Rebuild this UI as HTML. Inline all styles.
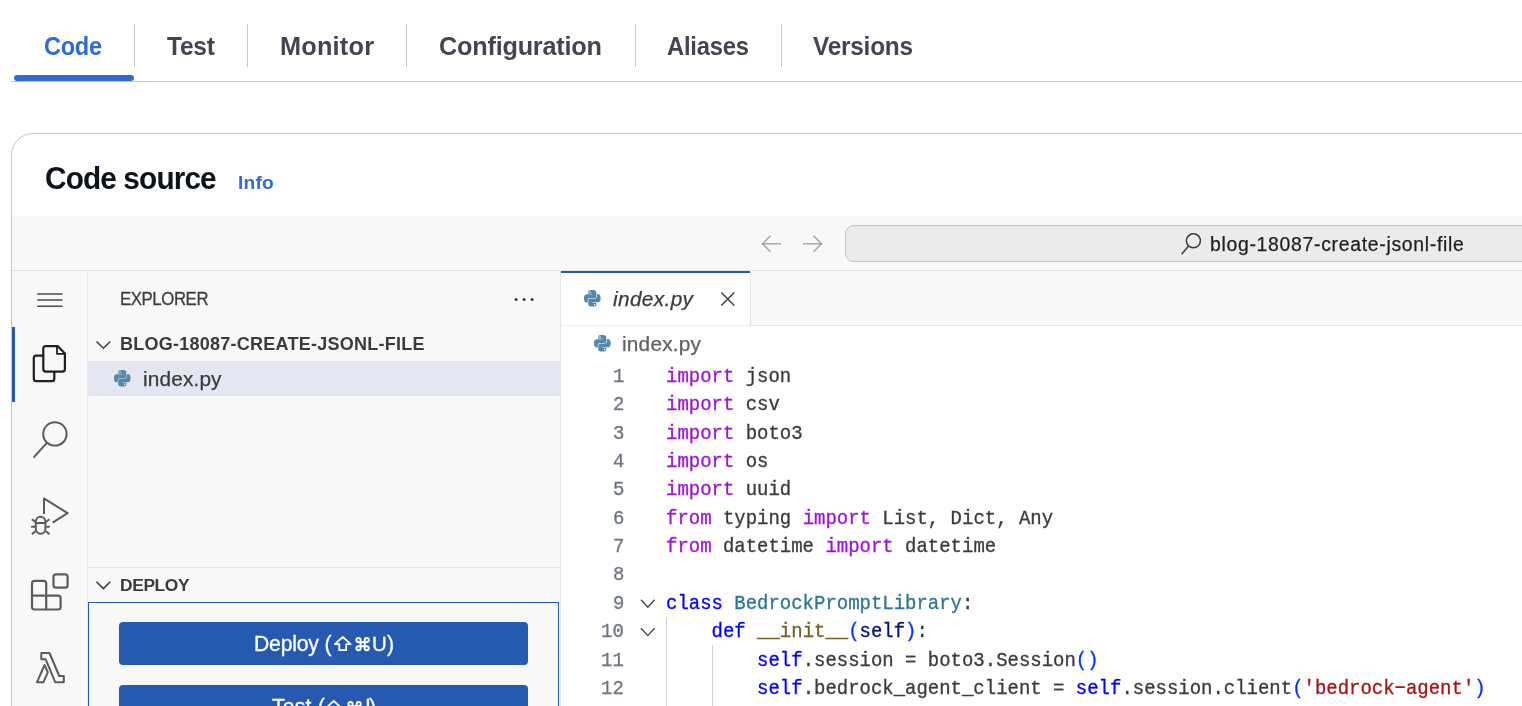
<!DOCTYPE html>
<html lang="en"><head><meta charset="utf-8"><title>Lambda - Code source</title>
<style>
html,body{margin:0;padding:0;background:#fff;}
body{width:1522px;height:706px;position:relative;overflow:hidden;font-family:"Liberation Sans",sans-serif;}
div,svg{box-sizing:border-box;}
svg{position:absolute;overflow:visible;}
.t{position:absolute;line-height:1;white-space:pre;will-change:transform;}
.bt{-webkit-text-stroke:0.3px #fff;}
.code,.ln{-webkit-text-stroke-width:0.3px;}
.s{font-family:"Liberation Sans",sans-serif;}
.m{font-family:"Liberation Mono",monospace;}
</style></head><body>

<nav id="tabs">
<div style="position:absolute;left:11px;top:81px;width:1511px;height:1px;background:#c6c6cd;"></div>
<div style="position:absolute;left:14px;top:75px;width:120px;height:6px;background:#2e6ad8;border-radius:3px;"></div>
<div class="t s" style="left:44.00px;top:36.10px;font-size:23.55px;color:#2e6ad8;font-weight:700;letter-spacing:-0.290px;transform:scaleY(1.074);transform-origin:0 19px;">Code</div>
<div class="t s" style="left:167.20px;top:35.10px;font-size:24.48px;color:#424650;font-weight:700;letter-spacing:-0.239px;transform:scaleY(1.0331);transform-origin:0 20px;">Test</div>
<div class="t s" style="left:280.00px;top:34.00px;font-size:25.29px;color:#424650;font-weight:700;letter-spacing:0.216px;">Monitor</div>
<div class="t s" style="left:439.20px;top:34.10px;font-size:25.24px;color:#424650;font-weight:700;letter-spacing:-0.204px;transform:scaleY(1.0019);transform-origin:0 21px;">Configuration</div>
<div class="t s" style="left:667.00px;top:35.10px;font-size:23.76px;color:#424650;font-weight:700;letter-spacing:-0.205px;transform:scaleY(1.0643);transform-origin:0 20px;">Aliases</div>
<div class="t s" style="left:813.00px;top:35.10px;font-size:24.35px;color:#424650;font-weight:700;letter-spacing:-0.214px;transform:scaleY(1.0388);transform-origin:0 20px;">Versions</div>
<div style="position:absolute;left:134px;top:24px;width:1px;height:43px;background:#c6c6cd;"></div>
<div style="position:absolute;left:247px;top:24px;width:1px;height:43px;background:#c6c6cd;"></div>
<div style="position:absolute;left:406px;top:24px;width:1px;height:43px;background:#c6c6cd;"></div>
<div style="position:absolute;left:635px;top:24px;width:1px;height:43px;background:#c6c6cd;"></div>
<div style="position:absolute;left:781px;top:24px;width:1px;height:43px;background:#c6c6cd;"></div>
</nav>
<section id="code-source">
<div style="position:absolute;left:11px;top:133px;width:1560px;height:700px;border:1px solid #c6c6cd;border-radius:22px;background:#fff;"></div>
<div class="t s" style="left:45.30px;top:163.70px;font-size:29.80px;color:#0f141a;font-weight:700;letter-spacing:-0.881px;transform:scaleY(1.08);transform-origin:0 25px;">Code source</div>
<div class="t s" style="left:238.40px;top:173.00px;font-size:19.20px;color:#2e6ad8;font-weight:700;letter-spacing:0.205px;">Info</div>
<div style="position:absolute;left:12px;top:216px;width:1520px;height:490px;background:#f8f8f8;"></div>
<div style="position:absolute;left:12px;top:270px;width:1520px;height:1px;background:#e5e5e5;"></div>
<svg style="left:760px;top:232px" width="66" height="24" viewBox="760 232 66 24" fill="none" stroke="#a9a9a9" stroke-width="1.6"><path d="M781 243.8H762.5M770.5 235.8l-8 8 8 8"/><path d="M803 243.8h18.5M813.5 235.8l8 8-8 8"/></svg>
<div style="position:absolute;left:845px;top:225px;width:700px;height:37px;background:#ebebeb;border:1px solid #c4c4c4;border-radius:9px;"></div>
<svg style="left:1178px;top:230px" width="28" height="28" viewBox="1178 230 28 28" fill="none" stroke="#3b3b3b" stroke-width="1.5"><circle cx="1193.4" cy="240.8" r="7"/><path d="M1188.6 246l-7 8.2"/></svg>
<div class="t s" style="left:1210.40px;top:235.00px;font-size:19.40px;color:#1f1f1f;-webkit-text-stroke-width:0.25px;letter-spacing:0.700px;">blog-18087-create-jsonl-file</div>
<aside id="activitybar">
<div style="position:absolute;left:87px;top:271px;width:1px;height:440px;background:#e5e5e5;"></div>
<div style="position:absolute;left:12px;top:327px;width:3.2px;height:74.5px;background:#2559b0;"></div>
<svg style="left:36px;top:290px" width="28" height="20" viewBox="36 290 28 20" fill="none" stroke="#4a4a4a" stroke-width="1.5"><path d="M37.2 294H62.5M37.2 300.1H62.5M37.2 306.3H62.5"/></svg>
<svg style="left:30px;top:343px" width="38" height="41" viewBox="30 343 38 41" fill="none" stroke="#1f1f1f" stroke-width="2.2" stroke-linejoin="round"><path d="M45.8 346.1H57.6L64.9 353.6V369.1a2.5 2.5 0 0 1-2.5 2.5H45.8a2.5 2.5 0 0 1-2.5-2.5V348.6a2.5 2.5 0 0 1 2.5-2.5z"/><path d="M57 346.3V353.8H64.7" stroke-width="1.8"/><path d="M43.3 355.6H36.3a2.5 2.5 0 0 0-2.5 2.5V378.7a2.5 2.5 0 0 0 2.5 2.5H51.8a2.5 2.5 0 0 0 2.5-2.5V371.6"/></svg>
<svg style="left:30px;top:419px" width="40" height="42" viewBox="30 419 40 42" fill="none" stroke="#5c5c5c" stroke-width="2"><circle cx="54.9" cy="433.9" r="11.7"/><path d="M47 442.6L33.6 457.6"/></svg>
<svg style="left:28px;top:495px" width="44" height="42" viewBox="28 495 44 42" fill="none" stroke="#5c5c5c" stroke-width="2" stroke-linejoin="round"><path d="M44 514V498.4L67.6 513.2L52.6 522.7"/><rect x="35.8" y="516.8" width="9.6" height="17" rx="4.8"/><path d="M35.8 523H45.4M35 526.7H31.1M46.2 526.7H49.8M35.4 522L31.9 519.2M45.9 522L49.4 519.2M35.4 531.3L31.9 534.1M45.9 531.3L49.4 534.1"/></svg>
<svg style="left:29px;top:571px" width="42" height="42" viewBox="29 571 42 42" fill="none" stroke="#5c5c5c" stroke-width="2.2"><path d="M34.5 580.9H43.7a2.5 2.5 0 0 1 2.5 2.5V595.7H58.1a2.5 2.5 0 0 1 2.5 2.5V607a2.5 2.5 0 0 1-2.5 2.5H34.5a2.5 2.5 0 0 1-2.5-2.5V583.4a2.5 2.5 0 0 1 2.5-2.5zM46.2 595.7V609.5M32 595.7H46.2"/><rect x="53.5" y="574.4" width="14.1" height="13.3" rx="2.5"/></svg>
<svg style="left:33px;top:650px" width="34" height="36" viewBox="33 650 34 36" fill="none" stroke="#5c5c5c" stroke-width="2" stroke-linejoin="round"><path d="M41.3 653H49.5L59.2 676H63.8V682.3H55.3L45.6 659.2H41.3Z"/><path d="M44.6 665L36.9 682.3H43.3L47.8 672.4Z"/></svg>
</aside>
<aside id="sidebar">
<div style="position:absolute;left:560px;top:271px;width:1px;height:440px;background:#e5e5e5;"></div>
<div class="t s" style="left:119.70px;top:292.30px;font-size:16.80px;color:#3b3b3b;-webkit-text-stroke-width:0.25px;letter-spacing:-0.414px;transform:scaleY(1.04);transform-origin:0 13px;">EXPLORER</div>
<div class="t s" style="left:119.70px;top:335.00px;font-size:18.00px;color:#3b3b3b;font-weight:700;letter-spacing:0.255px;">BLOG-18087-CREATE-JSONL-FILE</div>
<div style="position:absolute;left:88px;top:361px;width:472px;height:35px;background:#e4e6f1;"></div>
<div class="t s" style="left:142.50px;top:369.00px;font-size:20.80px;color:#3b3b3b;-webkit-text-stroke-width:0.25px;letter-spacing:0.147px;">index.py</div>
<svg style="left:114.1px;top:370.3px" width="16.5" height="16.5" viewBox="0 0 24 24"><path fill="#5288ab" d="M14.25.18l.9.2.73.26.59.3.45.32.34.34.25.34.16.33.1.3.04.26.02.2-.01.13V8.5l-.05.63-.13.55-.21.46-.26.38-.3.31-.33.25-.35.19-.35.14-.33.1-.3.07-.26.04-.21.02H8.77l-.69.05-.59.14-.5.22-.41.27-.33.32-.27.35-.2.36-.15.37-.1.35-.07.32-.04.27-.02.21v3.06H3.17l-.21-.03-.28-.07-.32-.12-.35-.18-.36-.26-.36-.36-.35-.46-.32-.59-.28-.73-.21-.88-.14-1.05-.05-1.23.06-1.22.16-1.04.24-.87.32-.71.36-.57.4-.44.42-.33.42-.24.4-.16.36-.1.32-.05.24-.01h.16l.06.01h8.16v-.83H6.18l-.01-2.75-.02-.37.05-.34.11-.31.17-.28.25-.26.31-.23.38-.2.44-.18.51-.15.58-.12.64-.1.71-.06.77-.04.84-.02 1.27.05zm-6.3 1.98l-.23.33-.08.41.08.41.23.34.33.22.41.09.41-.09.33-.22.23-.34.08-.41-.08-.41-.23-.33-.33-.22-.41-.09-.41.09zm13.09 3.95l.28.06.32.12.35.18.36.27.36.35.35.47.32.59.28.73.21.88.14 1.04.05 1.23-.06 1.23-.16 1.04-.24.86-.32.71-.36.57-.4.45-.42.33-.42.24-.4.16-.36.09-.32.05-.24.02-.16-.01h-8.22v.82h5.84l.01 2.76.02.36-.05.34-.11.31-.17.29-.25.25-.31.24-.38.2-.44.17-.51.15-.58.13-.64.09-.71.07-.77.04-.84.01-1.27-.04-1.07-.14-.9-.2-.73-.25-.59-.3-.45-.33-.34-.34-.25-.34-.16-.33-.1-.3-.04-.25-.02-.2.01-.13v-5.34l.05-.64.13-.54.21-.46.26-.38.3-.32.33-.24.35-.2.35-.14.33-.1.3-.06.26-.04.21-.02.13-.01h5.84l.69-.05.59-.14.5-.21.41-.28.33-.32.27-.35.2-.36.15-.36.1-.35.07-.32.04-.28.02-.21V6.07h2.09l.14.01zm-6.47 14.25l-.23.33-.08.41.08.41.23.33.33.23.41.08.41-.08.33-.23.23-.33.08-.41-.08-.41-.23-.33-.33-.23-.41-.08-.41.08z"/></svg>
<svg style="left:512px;top:296px" width="26" height="8" viewBox="512 296 26 8" fill="#3b3b3b"><circle cx="516.1" cy="299.4" r="1.5"/><circle cx="524.1" cy="299.4" r="1.5"/><circle cx="532.1" cy="299.4" r="1.5"/></svg>
<svg style="left:94px;top:338px" width="20" height="14" viewBox="94 338 20 14" fill="none" stroke="#3b3b3b" stroke-width="1.5"><path d="M96.5 341.5L103.4 348.3L110.3 341.5"/></svg>
<svg style="left:94px;top:578px" width="20" height="14" viewBox="94 578 20 14" fill="none" stroke="#3b3b3b" stroke-width="1.5"><path d="M96.5 581.8L103.4 588.6L110.3 581.8"/></svg>
<div style="position:absolute;left:88px;top:567px;width:472px;height:1px;background:#e5e5e5;"></div>
<div class="t s" style="left:119.70px;top:577.00px;font-size:17.40px;color:#3b3b3b;font-weight:700;letter-spacing:-0.390px;">DEPLOY</div>
<div style="position:absolute;left:88px;top:602px;width:471px;height:110px;border:1px solid #2559b0;"></div>
<div style="position:absolute;left:119px;top:622px;width:409px;height:43px;background:#265ab0;border-radius:4px;"></div>
<div style="position:absolute;left:119px;top:685px;width:409px;height:43px;background:#265ab0;border-radius:4px;"></div>
<div class="bt t s" style="left:254.30px;top:633.00px;font-size:21.20px;color:#fff;letter-spacing:-0.206px;">Deploy (</div>
<svg style="left:334.3px;top:636px" width="17.5" height="15" viewBox="0 0 17.5 15" fill="none" stroke="#fff" stroke-width="1.8" stroke-linejoin="round"><path d="M8.75 0.8 L0.9 8.2 H5.3 V14.2 H12.2 V8.2 H16.6 Z"/></svg>
<svg style="left:355px;top:637px" width="15.2" height="14.4" viewBox="1.5 1.5 21 21" fill="none" stroke="#fff" stroke-width="2.9"><path d="M18 3a3 3 0 0 0-3 3v12a3 3 0 0 0 3 3 3 3 0 0 0 3-3 3 3 0 0 0-3-3H6a3 3 0 0 0-3 3 3 3 0 0 0 3 3 3 3 0 0 0 3-3V6a3 3 0 0 0-3-3 3 3 0 0 0-3 3 3 3 0 0 0 3 3h12a3 3 0 0 0 3-3 3 3 0 0 0-3-3z"/></svg>
<div class="bt t s" style="left:372.00px;top:634.00px;font-size:20.40px;color:#fff;">U</div>
<div class="bt t s" style="left:387.20px;top:633.00px;font-size:21.20px;color:#fff;">)</div>
<div class="bt t s" style="left:271.90px;top:696.00px;font-size:21.20px;color:#fff;letter-spacing:0.194px;">Test (</div>
<svg style="left:325.4px;top:699.7px" width="17.5" height="15" viewBox="0 0 17.5 15" fill="none" stroke="#fff" stroke-width="1.8" stroke-linejoin="round"><path d="M8.75 0.8 L0.9 8.2 H5.3 V14.2 H12.2 V8.2 H16.6 Z"/></svg>
<svg style="left:346.6px;top:700.7px" width="15.2" height="14.4" viewBox="1.5 1.5 21 21" fill="none" stroke="#fff" stroke-width="2.9"><path d="M18 3a3 3 0 0 0-3 3v12a3 3 0 0 0 3 3 3 3 0 0 0 3-3 3 3 0 0 0-3-3H6a3 3 0 0 0-3 3 3 3 0 0 0 3 3 3 3 0 0 0 3-3V6a3 3 0 0 0-3-3 3 3 0 0 0-3 3 3 3 0 0 0 3 3h12a3 3 0 0 0 3-3 3 3 0 0 0-3-3z"/></svg>
<div class="bt t s" style="left:365.00px;top:696.00px;font-size:21.20px;color:#fff;">I</div>
<div class="bt t s" style="left:369.40px;top:696.00px;font-size:21.20px;color:#fff;">)</div>
</aside>
<main id="editor">
<div style="position:absolute;left:561px;top:271px;width:961px;height:435px;background:#fff;"></div>
<div style="position:absolute;left:561px;top:271px;width:961px;height:55px;background:#f8f8f8;border-bottom:1px solid #e5e5e5;"></div>
<div style="position:absolute;left:561px;top:271px;width:189.5px;height:55px;background:#fff;border-right:1px solid #e5e5e5;"></div>
<div style="position:absolute;left:561px;top:325px;width:189px;height:1px;background:#efefef;"></div>
<div style="position:absolute;left:561px;top:270.5px;width:189px;height:2.3px;background:#2559b0;"></div>
<div class="t s" style="left:612.50px;top:289.00px;font-size:20.80px;color:#3b3b3b;-webkit-text-stroke-width:0.25px;font-style:italic;letter-spacing:0.361px;">index.py</div>
<div class="t s" style="left:621.90px;top:334.00px;font-size:20.80px;color:#616161;-webkit-text-stroke-width:0.25px;letter-spacing:0.218px;">index.py</div>
<svg style="left:584.2px;top:290.2px" width="16.6" height="16.6" viewBox="0 0 24 24"><path fill="#5288ab" d="M14.25.18l.9.2.73.26.59.3.45.32.34.34.25.34.16.33.1.3.04.26.02.2-.01.13V8.5l-.05.63-.13.55-.21.46-.26.38-.3.31-.33.25-.35.19-.35.14-.33.1-.3.07-.26.04-.21.02H8.77l-.69.05-.59.14-.5.22-.41.27-.33.32-.27.35-.2.36-.15.37-.1.35-.07.32-.04.27-.02.21v3.06H3.17l-.21-.03-.28-.07-.32-.12-.35-.18-.36-.26-.36-.36-.35-.46-.32-.59-.28-.73-.21-.88-.14-1.05-.05-1.23.06-1.22.16-1.04.24-.87.32-.71.36-.57.4-.44.42-.33.42-.24.4-.16.36-.1.32-.05.24-.01h.16l.06.01h8.16v-.83H6.18l-.01-2.75-.02-.37.05-.34.11-.31.17-.28.25-.26.31-.23.38-.2.44-.18.51-.15.58-.12.64-.1.71-.06.77-.04.84-.02 1.27.05zm-6.3 1.98l-.23.33-.08.41.08.41.23.34.33.22.41.09.41-.09.33-.22.23-.34.08-.41-.08-.41-.23-.33-.33-.22-.41-.09-.41.09zm13.09 3.95l.28.06.32.12.35.18.36.27.36.35.35.47.32.59.28.73.21.88.14 1.04.05 1.23-.06 1.23-.16 1.04-.24.86-.32.71-.36.57-.4.45-.42.33-.42.24-.4.16-.36.09-.32.05-.24.02-.16-.01h-8.22v.82h5.84l.01 2.76.02.36-.05.34-.11.31-.17.29-.25.25-.31.24-.38.2-.44.17-.51.15-.58.13-.64.09-.71.07-.77.04-.84.01-1.27-.04-1.07-.14-.9-.2-.73-.25-.59-.3-.45-.33-.34-.34-.25-.34-.16-.33-.1-.3-.04-.25-.02-.2.01-.13v-5.34l.05-.64.13-.54.21-.46.26-.38.3-.32.33-.24.35-.2.35-.14.33-.1.3-.06.26-.04.21-.02.13-.01h5.84l.69-.05.59-.14.5-.21.41-.28.33-.32.27-.35.2-.36.15-.36.1-.35.07-.32.04-.28.02-.21V6.07h2.09l.14.01zm-6.47 14.25l-.23.33-.08.41.08.41.23.33.33.23.41.08.41-.08.33-.23.23-.33.08-.41-.08-.41-.23-.33-.33-.23-.41-.08-.41.08z"/></svg>
<svg style="left:593.9px;top:335.3px" width="16.6" height="16.6" viewBox="0 0 24 24"><path fill="#5288ab" d="M14.25.18l.9.2.73.26.59.3.45.32.34.34.25.34.16.33.1.3.04.26.02.2-.01.13V8.5l-.05.63-.13.55-.21.46-.26.38-.3.31-.33.25-.35.19-.35.14-.33.1-.3.07-.26.04-.21.02H8.77l-.69.05-.59.14-.5.22-.41.27-.33.32-.27.35-.2.36-.15.37-.1.35-.07.32-.04.27-.02.21v3.06H3.17l-.21-.03-.28-.07-.32-.12-.35-.18-.36-.26-.36-.36-.35-.46-.32-.59-.28-.73-.21-.88-.14-1.05-.05-1.23.06-1.22.16-1.04.24-.87.32-.71.36-.57.4-.44.42-.33.42-.24.4-.16.36-.1.32-.05.24-.01h.16l.06.01h8.16v-.83H6.18l-.01-2.75-.02-.37.05-.34.11-.31.17-.28.25-.26.31-.23.38-.2.44-.18.51-.15.58-.12.64-.1.71-.06.77-.04.84-.02 1.27.05zm-6.3 1.98l-.23.33-.08.41.08.41.23.34.33.22.41.09.41-.09.33-.22.23-.34.08-.41-.08-.41-.23-.33-.33-.22-.41-.09-.41.09zm13.09 3.95l.28.06.32.12.35.18.36.27.36.35.35.47.32.59.28.73.21.88.14 1.04.05 1.23-.06 1.23-.16 1.04-.24.86-.32.71-.36.57-.4.45-.42.33-.42.24-.4.16-.36.09-.32.05-.24.02-.16-.01h-8.22v.82h5.84l.01 2.76.02.36-.05.34-.11.31-.17.29-.25.25-.31.24-.38.2-.44.17-.51.15-.58.13-.64.09-.71.07-.77.04-.84.01-1.27-.04-1.07-.14-.9-.2-.73-.25-.59-.3-.45-.33-.34-.34-.25-.34-.16-.33-.1-.3-.04-.25-.02-.2.01-.13v-5.34l.05-.64.13-.54.21-.46.26-.38.3-.32.33-.24.35-.2.35-.14.33-.1.3-.06.26-.04.21-.02.13-.01h5.84l.69-.05.59-.14.5-.21.41-.28.33-.32.27-.35.2-.36.15-.36.1-.35.07-.32.04-.28.02-.21V6.07h2.09l.14.01zm-6.47 14.25l-.23.33-.08.41.08.41.23.33.33.23.41.08.41-.08.33-.23.23-.33.08-.41-.08-.41-.23-.33-.33-.23-.41-.08-.41.08z"/></svg>
<svg style="left:719px;top:290px" width="18" height="18" viewBox="719 290 18 18" fill="none" stroke="#3b3b3b" stroke-width="1.4"><path d="M721.3 292.4L734.3 305.6M734.3 292.4L721.3 305.6"/></svg>
<svg style="left:638px;top:596px" width="20" height="14" viewBox="638 596 20 14" fill="none" stroke="#424242" stroke-width="1.3"><path d="M641 599.8L647.8 607.2L654.6 599.8"/></svg>
<svg style="left:638px;top:624px" width="20" height="14" viewBox="638 624 20 14" fill="none" stroke="#424242" stroke-width="1.3"><path d="M641 628.2L647.8 635.6L654.6 628.2"/></svg>
<div class="ln t m" style="left:612.61px;top:367.90px;font-size:18.98px;color:#6e7681;transform:scaleY(1.08);transform-origin:0 14px;">1</div>
<div class="code t m" style="left:666.00px;top:367.90px;font-size:18.98px;color:#3b3b3b;transform:scaleY(1.08);transform-origin:0 14px;"><span style="color:#9d14d6">import</span><span style="color:#3b3b3b"> json</span></div>
<div class="ln t m" style="left:612.61px;top:396.26px;font-size:18.98px;color:#6e7681;transform:scaleY(1.08);transform-origin:0 14px;">2</div>
<div class="code t m" style="left:666.00px;top:396.26px;font-size:18.98px;color:#3b3b3b;transform:scaleY(1.08);transform-origin:0 14px;"><span style="color:#9d14d6">import</span><span style="color:#3b3b3b"> csv</span></div>
<div class="ln t m" style="left:612.61px;top:424.62px;font-size:18.98px;color:#6e7681;transform:scaleY(1.08);transform-origin:0 14px;">3</div>
<div class="code t m" style="left:666.00px;top:424.62px;font-size:18.98px;color:#3b3b3b;transform:scaleY(1.08);transform-origin:0 14px;"><span style="color:#9d14d6">import</span><span style="color:#3b3b3b"> boto3</span></div>
<div class="ln t m" style="left:612.61px;top:452.98px;font-size:18.98px;color:#6e7681;transform:scaleY(1.08);transform-origin:0 14px;">4</div>
<div class="code t m" style="left:666.00px;top:452.98px;font-size:18.98px;color:#3b3b3b;transform:scaleY(1.08);transform-origin:0 14px;"><span style="color:#9d14d6">import</span><span style="color:#3b3b3b"> os</span></div>
<div class="ln t m" style="left:612.61px;top:481.34px;font-size:18.98px;color:#6e7681;transform:scaleY(1.08);transform-origin:0 14px;">5</div>
<div class="code t m" style="left:666.00px;top:481.34px;font-size:18.98px;color:#3b3b3b;transform:scaleY(1.08);transform-origin:0 14px;"><span style="color:#9d14d6">import</span><span style="color:#3b3b3b"> uuid</span></div>
<div class="ln t m" style="left:612.61px;top:509.70px;font-size:18.98px;color:#6e7681;transform:scaleY(1.08);transform-origin:0 14px;">6</div>
<div class="code t m" style="left:666.00px;top:509.70px;font-size:18.98px;color:#3b3b3b;transform:scaleY(1.08);transform-origin:0 14px;"><span style="color:#9d14d6">from</span><span style="color:#3b3b3b"> typing </span><span style="color:#9d14d6">import</span><span style="color:#3b3b3b"> List, Dict, Any</span></div>
<div class="ln t m" style="left:612.61px;top:538.06px;font-size:18.98px;color:#6e7681;transform:scaleY(1.08);transform-origin:0 14px;">7</div>
<div class="code t m" style="left:666.00px;top:538.06px;font-size:18.98px;color:#3b3b3b;transform:scaleY(1.08);transform-origin:0 14px;"><span style="color:#9d14d6">from</span><span style="color:#3b3b3b"> datetime </span><span style="color:#9d14d6">import</span><span style="color:#3b3b3b"> datetime</span></div>
<div class="ln t m" style="left:612.61px;top:566.42px;font-size:18.98px;color:#6e7681;transform:scaleY(1.08);transform-origin:0 14px;">8</div>
<div class="ln t m" style="left:612.61px;top:594.78px;font-size:18.98px;color:#6e7681;transform:scaleY(1.08);transform-origin:0 14px;">9</div>
<div class="code t m" style="left:666.00px;top:594.78px;font-size:18.98px;color:#3b3b3b;transform:scaleY(1.08);transform-origin:0 14px;"><span style="color:#0000ff">class</span><span style="color:#3b3b3b"> </span><span style="color:#2e7691">BedrockPromptLibrary</span><span style="color:#3b3b3b">:</span></div>
<div class="ln t m" style="left:601.21px;top:623.14px;font-size:18.98px;color:#6e7681;transform:scaleY(1.08);transform-origin:0 14px;">10</div>
<div class="code t m" style="left:666.00px;top:623.14px;font-size:18.98px;color:#3b3b3b;transform:scaleY(1.08);transform-origin:0 14px;"><span style="color:#3b3b3b">    </span><span style="color:#0000ff">def</span><span style="color:#3b3b3b"> </span><span style="color:#795e26">__init__</span><span style="color:#0431fa">(</span><span style="color:#001080">self</span><span style="color:#0431fa">)</span><span style="color:#3b3b3b">:</span></div>
<div class="ln t m" style="left:601.21px;top:651.50px;font-size:18.98px;color:#6e7681;transform:scaleY(1.08);transform-origin:0 14px;">11</div>
<div class="code t m" style="left:666.00px;top:651.50px;font-size:18.98px;color:#3b3b3b;transform:scaleY(1.08);transform-origin:0 14px;"><span style="color:#3b3b3b">        </span><span style="color:#0000ff">self</span><span style="color:#3b3b3b">.session = boto3.Session</span><span style="color:#0431fa">()</span></div>
<div class="ln t m" style="left:601.21px;top:679.86px;font-size:18.98px;color:#6e7681;transform:scaleY(1.08);transform-origin:0 14px;">12</div>
<div class="code t m" style="left:666.00px;top:679.86px;font-size:18.98px;color:#3b3b3b;transform:scaleY(1.08);transform-origin:0 14px;"><span style="color:#3b3b3b">        </span><span style="color:#0000ff">self</span><span style="color:#3b3b3b">.bedrock_agent_client = </span><span style="color:#0000ff">self</span><span style="color:#3b3b3b">.session.client</span><span style="color:#0431fa">(</span><span style="color:#a31515">'bedrock−agent'</span><span style="color:#0431fa">)</span></div>
<div style="position:absolute;left:666.3px;top:617px;width:1px;height:100px;background:#d3d3d3;"></div>
<div style="position:absolute;left:712.2px;top:645.3px;width:1px;height:100px;background:#d3d3d3;"></div>
</main>
</section>
</body></html>
